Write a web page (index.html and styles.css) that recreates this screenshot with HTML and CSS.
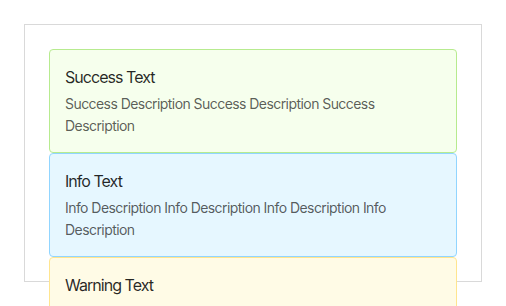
FILE: index.html
```html
<!DOCTYPE html>
<html lang="en">
<head>
    <meta charset="UTF-8">
    <meta name="viewport" content="width=device-width, initial-scale=1.0">
    <title>Alerts</title>
    <link rel="stylesheet" href="styles.css">
</head>
<body>

<div class="frame">
    <div class="alert success">
        <div class="alert-message">Success Text</div>
        <div class="alert-description">Success Description Success Description Success Description</div>
    </div>
    <div class="alert info">
        <div class="alert-message">Info Text</div>
        <div class="alert-description">Info Description Info Description Info Description Info Description</div>
    </div>
    <div class="alert warning">
        <div class="alert-message">Warning Text</div>
        <div class="alert-description">Warning Description Warning Description Warning Description Warning Description</div>
    </div>
</div>

</body>
</html>
```

FILE: styles.css
```css
body {
    margin: 0;
    padding: 24px;
    font-family: Inter, "Noto Sans", sans-serif;
    background-color: #fff;
}

.frame {
    box-sizing: border-box;
    width: 458px;
    height: 258px;
    padding: 24px;
    border: 1px solid #d9d9d9;
}

.alert {
    padding: 15px;
    border: 1px solid transparent;
    border-radius: 4px;
}

.alert-message {
    font-size: 16px;
    line-height: 24px;
    margin-bottom: 4px;
    letter-spacing: -0.06em;
    color: rgba(0, 0, 0, 0.85);
}

.alert-description {
    font-size: 14px;
    line-height: 22px;
    letter-spacing: -0.04em;
    color: rgba(0, 0, 0, 0.65);
}

.success { background-color: #f6ffed; border-color: #b7eb8f; }
.info { background-color: #e6f7ff; border-color: #91d5ff; }
.warning { background-color: #fffbe6; border-color: #ffe58f; }
```
